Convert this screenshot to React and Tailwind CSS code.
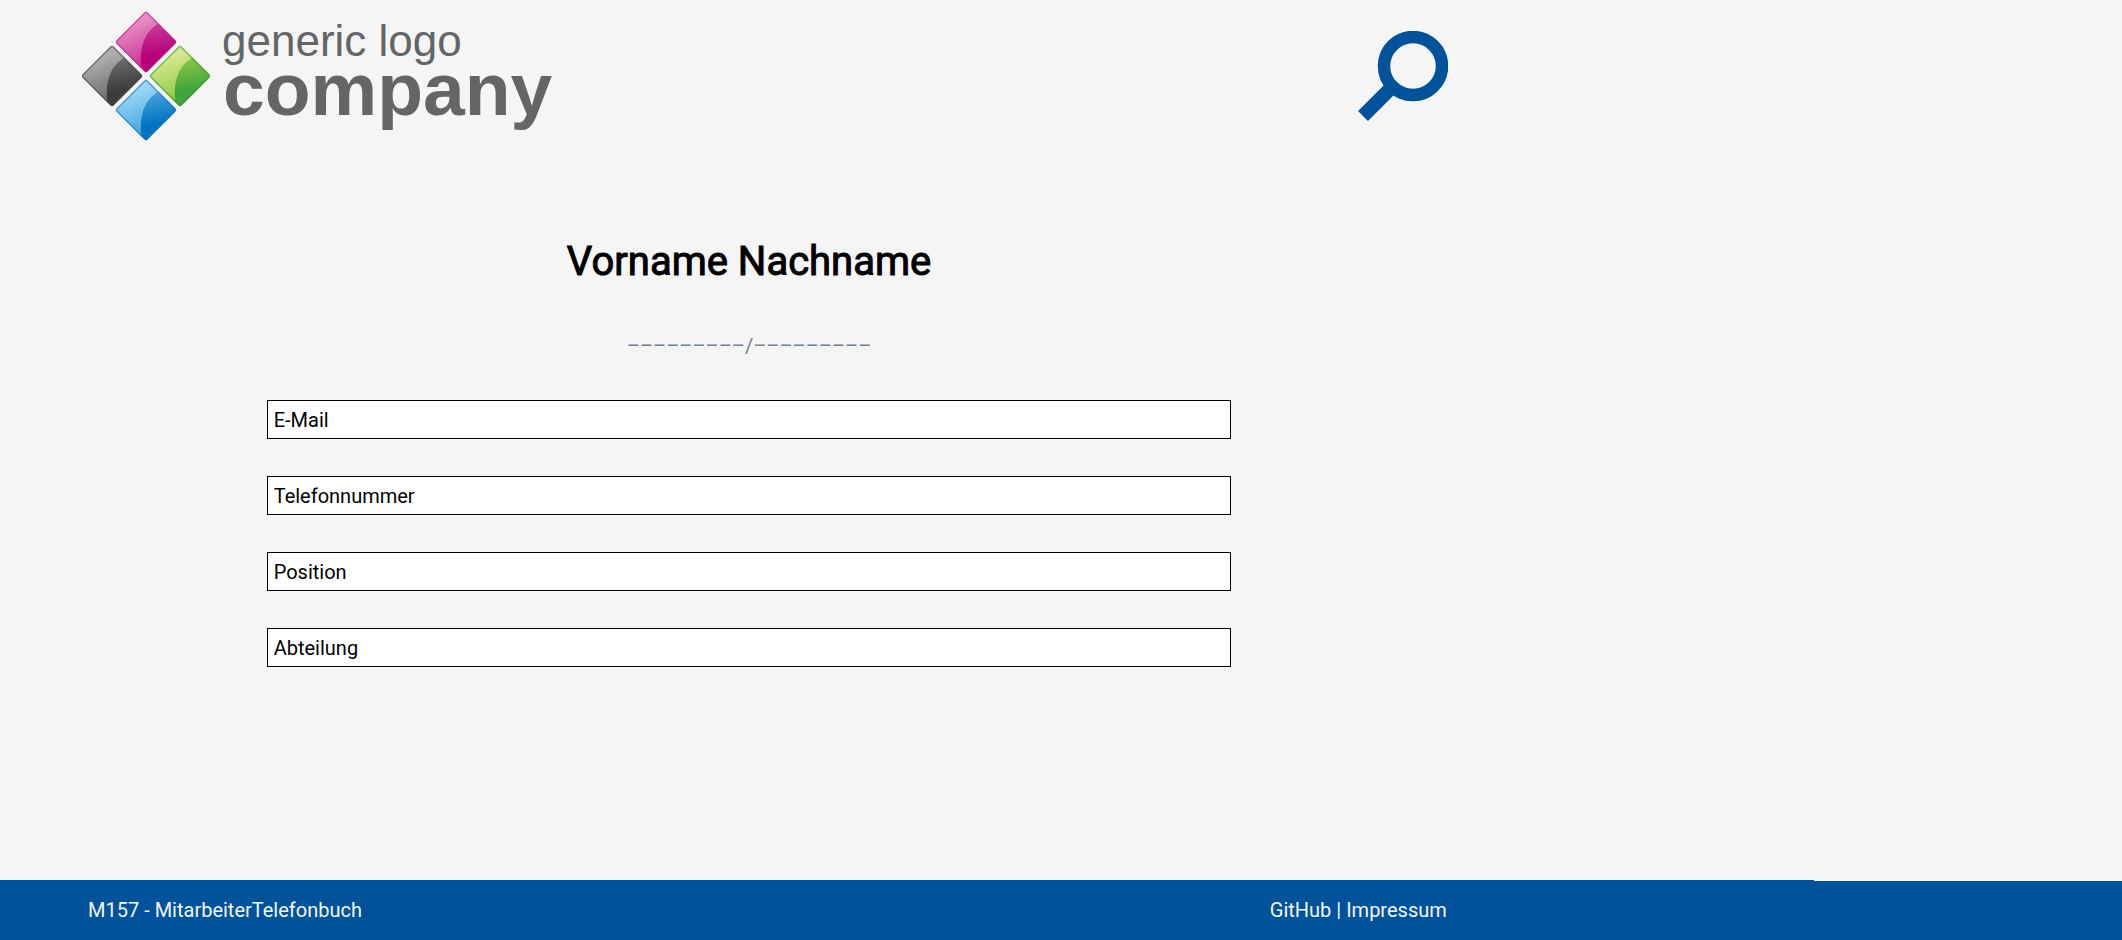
const TILES = [
  { id: 'pink', x: 64, y: 31, from: '#e58cc0', mid: '#cb2f94', to: '#b5007a', gloss: '#cc3c9a', edge: '#c2298f' },
  { id: 'gray', x: 30, y: 65, from: '#adafb1', mid: '#68696b', to: '#3c3c3e', gloss: '#6c6d6f', edge: '#4c4d4f' },
  { id: 'green', x: 98, y: 65, from: '#d6e992', mid: '#8cc63f', to: '#3ea63c', gloss: '#8fc746', edge: '#2c9638' },
  { id: 'blue', x: 64, y: 99, from: '#9ad6f5', mid: '#3fa3dc', to: '#0074c0', gloss: '#46a6e0', edge: '#1b76b8' },
];

function Tile({ tile }) {
  const base = `${tile.id}-base`;
  const shine = `${tile.id}-shine`;
  const clip = `${tile.id}-clip`;
  return (
    <g transform={`translate(${tile.x} ${tile.y})`}>
      <defs>
        <linearGradient id={base} gradientUnits="userSpaceOnUse" x1="4" y1="-18" x2="10" y2="14">
          <stop offset="0" stopColor={tile.gloss} />
          <stop offset="1" stopColor={tile.to} />
        </linearGradient>
        <linearGradient id={shine} gradientUnits="userSpaceOnUse" x1="-14" y1="-18" x2="2" y2="24">
          <stop offset="0" stopColor={tile.from} />
          <stop offset="1" stopColor={tile.mid} />
        </linearGradient>
        <clipPath id={clip}>
          <rect x="-22" y="-22" width="44" height="44" rx="2.5" transform="rotate(45)" />
        </clipPath>
      </defs>
      <g clipPath={`url(#${clip})`}>
        <rect x="-32" y="-32" width="64" height="64" fill={`url(#${base})`} />
        <path d="M-32 -32H18V-22L13 -19C-2 -10 -8 6 -4 32H-32Z" fill={`url(#${shine})`} />
        <rect
          x="-22"
          y="-22"
          width="44"
          height="44"
          rx="2.5"
          transform="rotate(45)"
          fill="none"
          stroke={tile.edge}
          strokeOpacity="0.5"
          strokeWidth="3"
        />
      </g>
    </g>
  );
}

function Logo() {
  return (
    <svg width="472" height="134" viewBox="0 0 472 134" role="img" aria-label="generic logo company">
      {TILES.map((tile) => (
        <Tile key={tile.id} tile={tile} />
      ))}
      <g fill="#646567" fontFamily="'Liberation Sans', Arial, sans-serif">
        <text x="140" y="45" fontSize="44">generic logo</text>
        <text x="141" y="104" fontSize="75" fontWeight="700">company</text>
      </g>
    </svg>
  );
}

function SearchIcon() {
  return (
    <svg width="90" height="90" viewBox="0 0 90 90" fill="none" stroke="#00529b" aria-hidden="true">
      <circle cx="55" cy="35" r="29" strokeWidth="12.5" />
      <path d="M5 85L34 56" strokeWidth="14" />
    </svg>
  );
}

const FIELDS = [
  { name: 'email', label: 'E-Mail', type: 'email' },
  { name: 'phone', label: 'Telefonnummer', type: 'tel' },
  { name: 'position', label: 'Position', type: 'text' },
  { name: 'department', label: 'Abteilung', type: 'text' },
];

export default function App() {
  return (
    <div className="flex min-h-screen flex-col bg-[#f5f5f5] font-[Roboto,sans-serif] text-xl leading-6 text-black">
      <div className="w-[70.6%] grow">
        <header className="flex items-start justify-between pt-[11px] pr-[50px] pl-[82px]">
          <a href="#home">
            <Logo />
          </a>
          <button type="button" aria-label="Suche" className="mt-5">
            <SearchIcon />
          </button>
        </header>

        <main className="flex flex-col items-center pt-[93px] pb-12">
          <h1 className="text-[40px] leading-12 font-normal [-webkit-text-stroke:1px_black]">
            Vorname Nachname
          </h1>
          <p className="mt-12 text-[#708090]">–––––––––/–––––––––</p>
          <form className="mt-[42px] flex w-[64.4%] flex-col gap-[37px]">
            {FIELDS.map((field) => (
              <input
                key={field.name}
                name={field.name}
                type={field.type}
                aria-label={field.label}
                placeholder={field.label}
                className="h-[39px] w-full border border-black bg-white px-1.5 placeholder:text-black"
              />
            ))}
          </form>
        </main>
      </div>

      <footer className="flex items-end text-[#f5f5f5]">
        <div className="h-[60px] w-[85.5%] bg-[#00529b]">
          <div className="flex h-full w-[82.5%] items-center justify-between pr-[50px] pl-[88px]">
            <span>M157 - MitarbeiterTelefonbuch</span>
            <nav>
              <a href="#github">GitHub</a> | <a href="#impressum">Impressum</a>
            </nav>
          </div>
        </div>
        <div className="h-[59px] grow bg-[#00529b]" />
      </footer>
    </div>
  );
}
